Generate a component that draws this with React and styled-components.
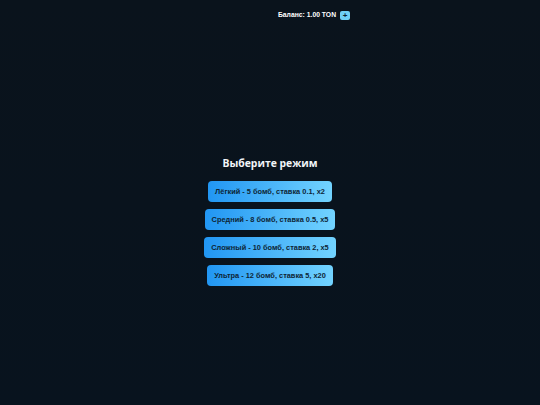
import React from 'react';
import styled, { createGlobalStyle } from 'styled-components';

const GlobalStyle = createGlobalStyle`
    html, body {
        margin: 0;
        padding: 0;
        background: #09131d;
    }
    * { box-sizing: border-box; }
`

const Page = styled.div`
    width: 540px;
    height: 405px;
    display: flex;
    flex-direction: column;
    background: linear-gradient(180deg, #0a131c 0%, #08131e 100%);
    font-family: "Liberation Sans", Arial, sans-serif;
`

const Header = styled.div`
    display: flex;
    justify-content: center;
    align-items: flex-start;
    gap: 4px;
    padding: 10px 0 0 88px;
    height: 30px;
`

const Balance = styled.span`
    color: #ffffff;
    font-size: 6.8px;
    font-weight: 700;
    line-height: 10px;
`

const PlusButton = styled.button`
    width: 10px;
    height: 9px;
    margin-top: 0.5px;
    padding: 0;
    border: none;
    border-radius: 2px;
    background: #6fd0f7;
    color: #0b2233;
    font-size: 8px;
    font-weight: 700;
    line-height: 9px;
    display: flex;
    align-items: center;
    justify-content: center;
    font-family: inherit;
`

const Main = styled.div`
    flex: 1;
    display: flex;
    flex-direction: column;
    align-items: center;
    padding-top: 126px;
`

const Title = styled.h2`
    margin: 0 0 10px;
    color: #f2f5f8;
    font-family: "Open Sans", "Noto Sans", sans-serif;
    font-size: 10.4px;
    font-weight: 700;
    line-height: 15px;
`

const ModeList = styled.div`
    display: flex;
    flex-direction: column;
    align-items: center;
    gap: 7px;
`

const ModeButton = styled.button`
    height: 21px;
    padding: 0 7px;
    border: none;
    border-radius: 4px;
    background: linear-gradient(90deg, #2196f3 0%, #72d3ff 100%);
    color: #0d2536;
    font-family: "Liberation Sans", Arial, sans-serif;
    font-size: 7.4px;
    font-weight: 700;
    cursor: pointer;
    white-space: nowrap;
`

const modes = [
    'Лёгкий - 5 бомб, ставка 0.1, x2',
    'Средний - 8 бомб, ставка 0.5, x5',
    'Сложный - 10 бомб, ставка 2, x5',
    'Ультра - 12 бомб, ставка 5, x20',
]

export default function App() {
    return (
        <>
            <GlobalStyle />
            <Page>
                <Header>
                    <Balance>Баланс: 1.00 TON</Balance>
                    <PlusButton>+</PlusButton>
                </Header>
                <Main>
                    <Title>Выберите режим</Title>
                    <ModeList>
                        {modes.map((m) => (
                            <ModeButton key={m}>{m}</ModeButton>
                        ))}
                    </ModeList>
                </Main>
            </Page>
        </>
    );
}
